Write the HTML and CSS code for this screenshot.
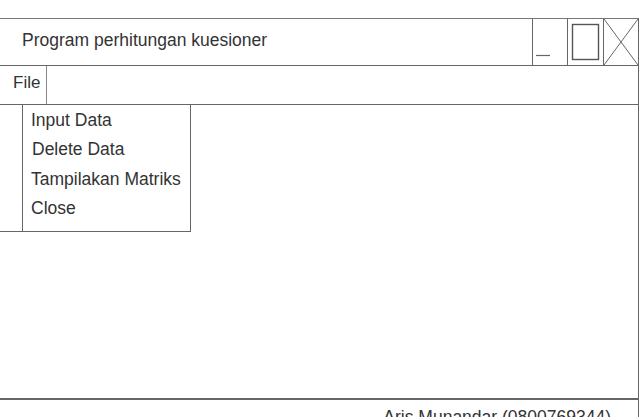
FILE: index.html
```html
<!DOCTYPE html>
<html>
<head>
  <meta charset="utf-8">
  <meta name="viewport" content="width=device-width">
  <title>Program perhitungan kuesioner</title>
  <link rel="stylesheet" href="styles.css">
</head>
<body>
  <div class="window">

    <div class="titlebar">
      <span class="title">Program perhitungan kuesioner</span>
      <span class="winBtn btnMin">
        <svg width="34" height="46" viewBox="0 0 34 46">
          <line x1="3" y1="36.5" x2="17" y2="36.5" stroke="#666" stroke-width="1.2"/>
        </svg>
      </span>
      <span class="winBtn btnMax">
        <svg width="35" height="46" viewBox="0 0 35 46">
          <rect x="4.5" y="5.5" width="26" height="35" fill="none" stroke="#555" stroke-width="1.4"/>
        </svg>
      </span>
      <span class="winBtn btnClose">
        <svg width="34" height="46" viewBox="0 0 34 46">
          <line x1="0" y1="0" x2="34" y2="46" stroke="#666" stroke-width="1"/>
          <line x1="34" y1="0" x2="0" y2="46" stroke="#666" stroke-width="1"/>
        </svg>
      </span>
    </div>

    <div class="menubar">
      <span class="menuItem">File</span>
    </div>

    <div class="main"></div>

    <div class="statusbar">Aris Munandar (0800769344)</div>

    <!-- open File menu -->
    <div class="dropdown">
      <div class="dropStub"></div>
      <ul class="dropList">
        <li>Input Data</li>
        <li class="shift">Delete Data</li>
        <li>Tampilakan Matriks</li>
        <li>Close</li>
      </ul>
    </div>

  </div>
</body>
</html>
```

FILE: styles.css
```css
* {
  box-sizing: border-box;
}

html, body {
  margin: 0;
  padding: 0;
  background: #ffffff;
  overflow: hidden;
}

body {
  font-family: "Liberation Sans", Arial, sans-serif;
  color: #333;
}

.window {
  position: relative;
  margin-top: 18px;
  width: 639px;
  border-right: 1px solid #666;
  display: flex;
  flex-direction: column;
}

.titlebar {
  display: flex;
  flex-direction: row;
  height: 48px;
  border-top: 1px solid #777;
  border-bottom: 1px solid #666;
}

.title {
  flex: 1;
  display: flex;
  align-items: center;
  padding-left: 22px;
  padding-bottom: 4px;
  font-size: 17.5px;
}

.winBtn {
  display: block;
  width: 35px;
  border-left: 1px solid #666;
}

.winBtn svg {
  display: block;
}

.btnMax {
  width: 36px;
}

.menubar {
  display: flex;
  flex-direction: row;
  height: 39px;
  border-bottom: 1px solid #666;
}

.menuItem {
  width: 47px;
  padding-left: 13px;
  font-size: 17px;
  line-height: 33px;
  border-right: 1px solid #888;
}

.main {
  height: 293px;
}

.statusbar {
  border-top: 2px solid #666;
  padding-top: 7px;
  padding-right: 27px;
  text-align: right;
  font-size: 17.5px;
  height: 40px;
}

.dropdown {
  position: absolute;
  top: 86px;
  left: 0;
  display: flex;
  flex-direction: row;
  height: 128px;
}

.dropStub {
  width: 22px;
  border-bottom: 1px solid #666;
}

.dropList {
  width: 169px;
  margin: 0;
  padding: 1px 0 0 8px;
  list-style-type: none;
  background: #ffffff;
  border: 1px solid #666;
}

.dropList li {
  font-size: 17.5px;
  line-height: 29.3px;
  white-space: nowrap;
}

.dropList li.shift {
  padding-left: 1px;
}
```
